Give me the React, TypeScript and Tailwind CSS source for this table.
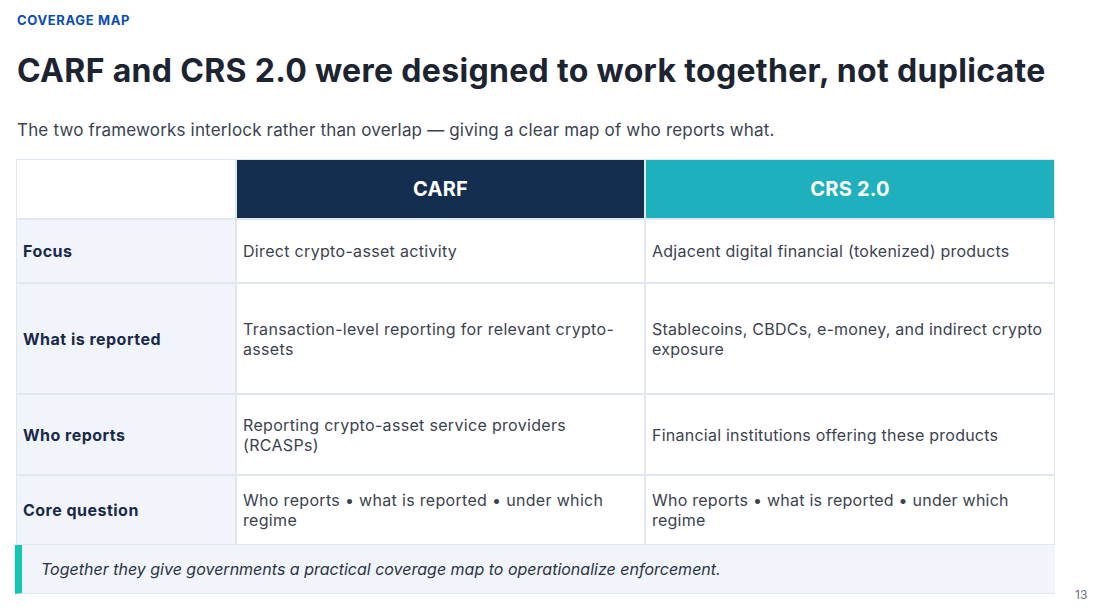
const ROWS = [
  {
    label: 'Focus',
    carf: 'Direct crypto-asset activity',
    crs: 'Adjacent digital financial (tokenized) products',
    h: 'h-[62px]',
  },
  {
    label: 'What is reported',
    carf: 'Transaction-level reporting for relevant crypto-assets',
    crs: 'Stablecoins, CBDCs, e-money, and indirect crypto exposure',
    h: 'h-[109px]',
  },
  {
    label: 'Who reports',
    carf: 'Reporting crypto-asset service providers (RCASPs)',
    crs: 'Financial institutions offering these products',
    h: 'h-[79px]',
  },
  {
    label: 'Core question',
    carf: 'Who reports • what is reported • under which regime',
    crs: 'Who reports • what is reported • under which regime',
    h: 'h-[68px]',
  },
];

export default function App() {
  return (
    <div
      className="relative w-[1105px] h-[610px] bg-white overflow-hidden"
      style={{ fontFamily: 'Inter, "Noto Sans", sans-serif' }}
    >
      <div className="pl-[17px] pr-[30px] pt-[11px]">
        <div className="text-[13px] font-bold tracking-[0.05em] text-[#0b4db3] leading-[18px]">COVERAGE MAP</div>
        <h1 className="mt-[23px] text-[32px] font-bold text-[#1d2431] leading-[38px] tracking-[0.01em] whitespace-nowrap">
          CARF and CRS 2.0 were designed to work together, not duplicate
        </h1>
        <p className="mt-[29px] text-[17px] text-[#3b4250] leading-[22px] tracking-[0.01em]">
          The two frameworks interlock rather than overlap — giving a clear map of who reports what.
        </p>
      </div>

      <div className="ml-[16px] mt-[18px] w-[1039px]">
        <div className="grid grid-cols-[218px_407px_408px] gap-[2px] bg-[#e0e7f0] p-[1px]">
          <div className="h-[58px] bg-white" />
          <div className="h-[58px] bg-[#132e4e] flex items-center justify-center text-[20px] font-bold text-white tracking-[0.01em]">
            CARF
          </div>
          <div className="h-[58px] bg-[#1eb0bd] flex items-center justify-center text-[20px] font-bold text-white tracking-[0.01em]">
            CRS 2.0
          </div>
          {ROWS.map((r) => (
            <div key={r.label} className="contents">
              <div className={`${r.h} bg-[#f1f5fb] flex items-center px-[6px] text-[16px] font-bold text-[#19294a] leading-[20px] tracking-[0.03em]`}>
                {r.label}
              </div>
              <div className={`${r.h} bg-white flex items-center px-[6px] pr-[20px] text-[16px] text-[#3b4250] leading-[20px] tracking-[0.02em]`}>
                {r.carf}
              </div>
              <div className={`${r.h} bg-white flex items-center pl-[6px] pr-[2px] text-[16px] text-[#3b4250] leading-[20px] tracking-[0.015em]`}>
                {r.crs}
              </div>
            </div>
          ))}
        </div>

        <div className="h-[49px] flex items-center bg-[#f1f5fb] border-l-[7px] border-[#12c6b4] border-b border-b-[#e0e7f0] -ml-[1px]">
          <p className="pl-[19px] text-[16px] italic text-[#2a3345]">
            Together they give governments a practical coverage map to operationalize enforcement.
          </p>
        </div>
      </div>

      <div className="absolute left-[1075px] top-[586px] text-[12px] text-[#6b7280]">13</div>
    </div>
  );
}
